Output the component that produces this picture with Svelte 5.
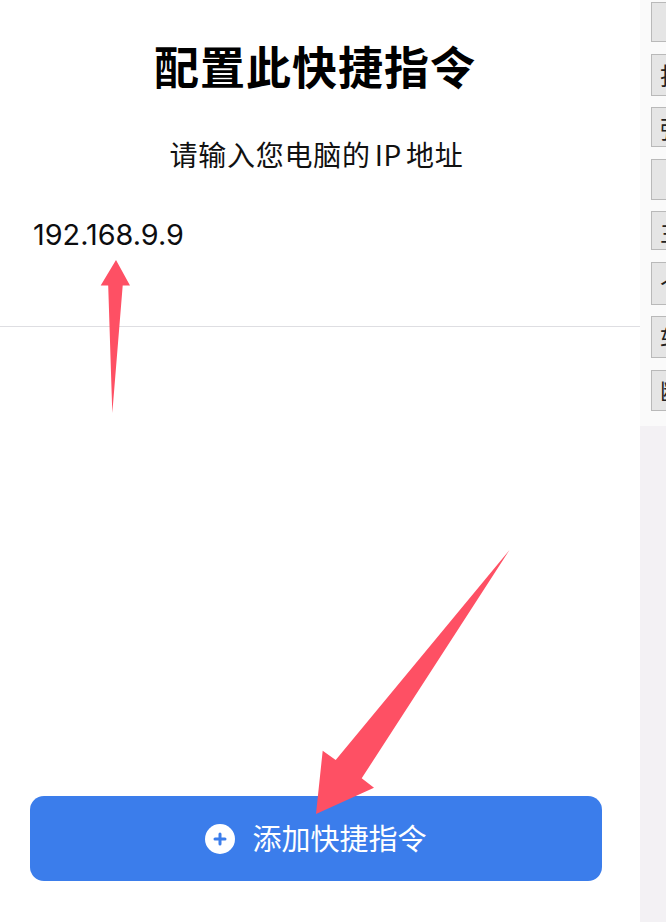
<script lang="ts">
  const sideButtons = [
    { label: '', height: 40 },
    { label: '抖', height: 42 },
    { label: '弹', height: 40 },
    { label: '', height: 41 },
    { label: '主', height: 39 },
    { label: '个', height: 43 },
    { label: '软', height: 42 },
    { label: '断', height: 41 },
  ];
</script>

<div class="screen">
  <main class="sheet">
    <h1>配置此快捷指令</h1>
    <p class="prompt">请输入您电脑的 IP 地址</p>
    <div class="field">192.168.9.9</div>
    <div class="spacer"></div>
    <button class="add">
      <svg width="30" height="30" viewBox="0 0 30 30" aria-hidden="true">
        <circle cx="15" cy="15" r="15" fill="#fff" />
        <path d="M15 10v10M10 15h10" stroke="#3b7deb" stroke-width="3" stroke-linecap="round" />
      </svg>
      <span>添加快捷指令</span>
    </button>

    <svg class="marks" width="640" height="922" viewBox="0 0 640 922" aria-hidden="true">
      <polygon points="116,260 130,285.5 122.7,285.5 112.3,413 108.2,285.5 100.7,285.5" fill="#fe5064" />
      <polygon points="509.5,550 361.7,778.3 374,787.7 316,814 322.7,750.7 335.7,760" fill="#fe5064" />
    </svg>
  </main>

  <aside class="side">
    <div class="stack">
      {#each sideButtons as btn}
        <div class="tool" style="height: {btn.height}px">{btn.label}</div>
      {/each}
    </div>
  </aside>
</div>

<style>
  :global(body) {
    margin: 0;
    background: #fff;
  }
  .screen {
    display: flex;
    width: 666px;
    height: 922px;
    overflow: hidden;
    font-family: "Noto Sans CJK SC", "Inter", sans-serif;
    color: #0d0d0f;
  }
  .sheet {
    position: relative;
    width: 640px;
    flex: none;
    display: flex;
    flex-direction: column;
    box-sizing: border-box;
    padding-bottom: 41px;
    background: #fff;
  }
  h1 {
    margin: 33px 10px 0 0;
    height: 66px;
    font-size: 45px;
    line-height: 66px;
    font-weight: 700;
    letter-spacing: 1px;
    text-align: center;
    color: #000;
  }
  .prompt {
    margin: 35px 7px 0 0;
    font-size: 28px;
    line-height: 40px;
    letter-spacing: 0.75px;
    word-spacing: -3px;
    text-align: center;
    color: #111;
  }
  .field {
    margin-top: 29px;
    height: 124px;
    padding: 12px 0 0 33px;
    box-sizing: border-box;
    border-bottom: 1px solid #dedee2;
    font-family: "Inter", sans-serif;
    font-size: 28.8px;
    line-height: 40px;
  }
  .spacer {
    flex: 1;
  }
  .add {
    width: 572px;
    height: 85px;
    margin-left: 30px;
    display: flex;
    align-items: center;
    justify-content: center;
    gap: 17px;
    padding: 0;
    border: 0;
    border-radius: 14px;
    background: #3b7deb;
    color: #fff;
    font-family: inherit;
    font-size: 29px;
  }
  .add span {
    line-height: 40px;
    margin-top: -4px;
  }
  .marks {
    position: absolute;
    top: 0;
    left: 0;
    pointer-events: none;
  }
  .side {
    flex: 1;
    background: #f3f1f4;
    overflow: hidden;
  }
  .stack {
    display: flex;
    flex-direction: column;
    gap: 11.5px;
    width: 100%;
    box-sizing: border-box;
    padding: 2px 0 15px 11px;
    background: #fafafa;
  }
  .tool {
    width: 60px;
    box-sizing: border-box;
    padding-left: 8px;
    display: flex;
    align-items: center;
    flex: none;
    border: 1px solid #b9b9b9;
    background: #e5e5e5;
    color: #222;
    font-size: 24px;
  }
</style>
